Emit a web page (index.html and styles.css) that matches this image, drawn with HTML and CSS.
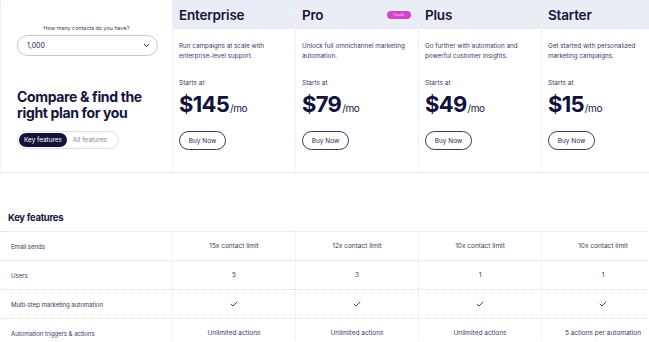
FILE: index.html
```html
<!DOCTYPE html>
<html lang="en">
<head>
<meta charset="utf-8">
<title>Compare plans</title>
<link rel="stylesheet" href="styles.css">
</head>
<body>
<div class="page">
  <section class="plans">
    <div class="intro">
      <p class="contacts-label">How many contacts do you have?</p>
      <div class="select">
        <span>1,000</span>
        <svg class="chev" width="7" height="5" viewBox="0 0 7 5"><path d="M1 1.2 L3.5 3.6 L6 1.2" fill="none" stroke="#2a2a4a" stroke-width="1"/></svg>
      </div>
      <h1 class="compare-title">Compare &amp; find the right plan for you</h1>
      <div class="toggle">
        <span class="toggle-opt active">Key features</span>
        <span class="toggle-opt">All features</span>
      </div>
    </div>

    <div class="plan">
      <div class="plan-head"><span class="plan-name">Enterprise</span></div>
      <div class="plan-body">
        <p class="plan-desc">Run campaigns at scale with enterprise-level support.</p>
        <p class="starts">Starts at</p>
        <p class="price"><span class="amount">$145</span><span class="per">/mo</span></p>
        <button class="buy">Buy Now</button>
      </div>
    </div>

    <div class="plan">
      <div class="plan-head"><span class="plan-name">Pro</span><span class="badge">Popular</span></div>
      <div class="plan-body">
        <p class="plan-desc">Unlock full omnichannel marketing automation.</p>
        <p class="starts">Starts at</p>
        <p class="price"><span class="amount">$79</span><span class="per">/mo</span></p>
        <button class="buy">Buy Now</button>
      </div>
    </div>

    <div class="plan">
      <div class="plan-head"><span class="plan-name">Plus</span></div>
      <div class="plan-body">
        <p class="plan-desc">Go further with automation and powerful customer insights.</p>
        <p class="starts">Starts at</p>
        <p class="price"><span class="amount">$49</span><span class="per">/mo</span></p>
        <button class="buy">Buy Now</button>
      </div>
    </div>

    <div class="plan">
      <div class="plan-head"><span class="plan-name">Starter</span></div>
      <div class="plan-body">
        <p class="plan-desc">Get started with personalized marketing campaigns.</p>
        <p class="starts">Starts at</p>
        <p class="price"><span class="amount">$15</span><span class="per">/mo</span></p>
        <button class="buy">Buy Now</button>
      </div>
    </div>
  </section>

  <h2 class="kf-title">Key features</h2>

  <div class="features">
    <div class="cell label">Email sends</div>
    <div class="cell">15x contact limit</div>
    <div class="cell">12x contact limit</div>
    <div class="cell">10x contact limit</div>
    <div class="cell">10x contact limit</div>

    <div class="cell label">Users</div>
    <div class="cell">5</div>
    <div class="cell">3</div>
    <div class="cell">1</div>
    <div class="cell">1</div>

    <div class="cell label">Multi-step marketing automation</div>
    <div class="cell"><svg class="check" width="8" height="6" viewBox="0 0 8 6"><path d="M0.8 2.9 L3 5 L7.2 0.8" fill="none" stroke="#2a2a4a" stroke-width="0.9"/></svg></div>
    <div class="cell"><svg class="check" width="8" height="6" viewBox="0 0 8 6"><path d="M0.8 2.9 L3 5 L7.2 0.8" fill="none" stroke="#2a2a4a" stroke-width="0.9"/></svg></div>
    <div class="cell"><svg class="check" width="8" height="6" viewBox="0 0 8 6"><path d="M0.8 2.9 L3 5 L7.2 0.8" fill="none" stroke="#2a2a4a" stroke-width="0.9"/></svg></div>
    <div class="cell"><svg class="check" width="8" height="6" viewBox="0 0 8 6"><path d="M0.8 2.9 L3 5 L7.2 0.8" fill="none" stroke="#2a2a4a" stroke-width="0.9"/></svg></div>

    <div class="cell label">Automation triggers &amp; actions</div>
    <div class="cell">Unlimited actions</div>
    <div class="cell">Unlimited actions</div>
    <div class="cell">Unlimited actions</div>
    <div class="cell">5 actions per automation</div>
  </div>
</div>
</body>
</html>
```

FILE: styles.css
```css
* { box-sizing: border-box; }
html, body { margin: 0; padding: 0; }
body {
  width: 649px;
  height: 342px;
  overflow: hidden;
  background: #ffffff;
  font-family: Inter, "Noto Sans", "Liberation Sans", sans-serif;
  color: #14143c;
}
p, h1, h2 { margin: 0; }
.page { width: 664px; }

.plans {
  display: grid;
  grid-template-columns: 172px repeat(4, 123px);
  height: 173px;
  border-bottom: 1px solid #ececf2;
}

.intro {
  border-left: 1px dotted #e2e2ea;
  display: flex;
  flex-direction: column;
  padding: 23px 0 0 16px;
}
.contacts-label {
  font-size: 5.4px;
  line-height: 10px;
  color: #3a3a5c;
  text-align: center;
  margin-right: 16px;
}
.select {
  margin-top: 2px;
  width: 141px;
  height: 21px;
  border: 1px solid #c6c6dc;
  border-radius: 11px;
  display: flex;
  align-items: center;
  justify-content: space-between;
  padding: 0 7px 0 9px;
  font-size: 7px;
  color: #1e1e40;
}
.chev { display: block; }
.compare-title {
  margin-top: 33px;
  font-size: 14px;
  line-height: 16px;
  font-weight: 700;
  letter-spacing: -0.35px;
  color: #14143c;
  width: 150px;
}
.toggle {
  margin-top: 10px;
  width: 102px;
  height: 18px;
  border: 1px solid #e0e0ea;
  border-radius: 9px;
  display: flex;
  align-items: center;
  padding: 0 1px;
  gap: 6px;
}
.toggle-opt {
  font-size: 6.4px;
  color: #8a8aa2;
}
.toggle-opt.active {
  background: #13133a;
  color: #ffffff;
  border-radius: 8px;
  height: 14px;
  display: flex;
  align-items: center;
  padding: 0 5px;
}

.plan {
  border-left: 1px dotted #e2e2ea;
  display: flex;
  flex-direction: column;
}
.plan-head {
  height: 29px;
  background: #ebedf6;
  display: flex;
  align-items: center;
  justify-content: space-between;
  padding: 0 7px 0 6px;
}
.plan-name {
  font-size: 13.5px;
  font-weight: 600;
  letter-spacing: -0.2px;
  color: #14143c;
}
.badge {
  background: #d444cc;
  color: #f4d8f2;
  font-size: 3px;
  height: 8px;
  width: 24px;
  border-radius: 4px;
  display: flex;
  align-items: center;
  justify-content: center;
}
.plan-body {
  padding: 0 6px;
  display: flex;
  flex-direction: column;
  align-items: flex-start;
}
.plan-desc {
  margin-top: 12px;
  font-size: 6.3px;
  line-height: 10px;
  color: #3a3a5e;
  width: 110px;
}
.starts {
  margin-top: 17px;
  font-size: 6.5px;
  line-height: 10px;
  color: #3a3a5e;
}
.price {
  margin-top: 4px;
  display: flex;
  align-items: baseline;
  line-height: 25px;
}
.amount {
  font-size: 22px;
  font-weight: 700;
  letter-spacing: -0.7px;
  color: #12123a;
}
.per {
  font-size: 10px;
  color: #14143c;
  margin-left: 1px;
  letter-spacing: -0.4px;
}
.buy {
  margin-top: 10px;
  width: 47px;
  height: 19px;
  border: 1px solid #3a3a5e;
  border-radius: 10px;
  background: #ffffff;
  font-family: inherit;
  font-size: 6.5px;
  color: #2a2a4c;
  padding: 0;
}

.kf-title {
  margin: 38px 0 0 8px;
  font-size: 9.5px;
  line-height: 14px;
  font-weight: 700;
  color: #14143c;
  letter-spacing: -0.3px;
}
.features {
  margin-top: 6px;
  display: grid;
  grid-template-columns: 172px repeat(4, 123px);
  grid-auto-rows: 29px;
}
.cell {
  border-top: 1px dotted #dedee8;
  border-left: 1px dotted #e6e6ee;
  display: flex;
  align-items: center;
  justify-content: center;
  font-size: 6.5px;
  color: #3a3a5c;
}
.cell.label {
  border-left: none;
  justify-content: flex-start;
  padding-left: 11px;
  font-size: 6.2px;
  letter-spacing: -0.1px;
}
.check { display: block; }
```
